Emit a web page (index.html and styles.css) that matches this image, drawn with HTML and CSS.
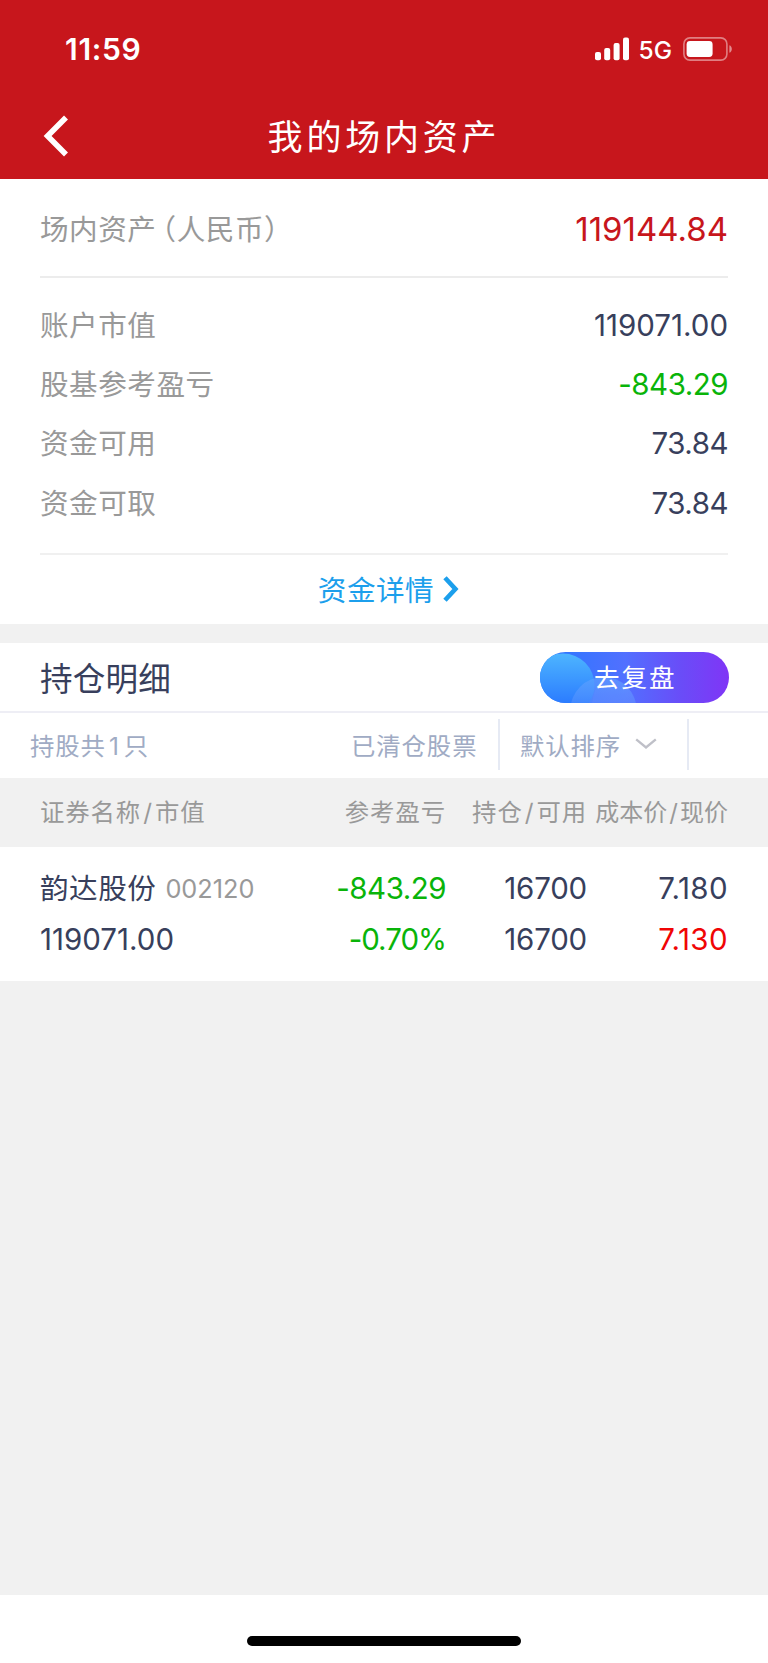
FILE: index.html
```html
<!DOCTYPE html>
<html lang="zh-CN">
<head>
<meta charset="utf-8">
<title>我的场内资产</title>
<link rel="stylesheet" href="styles.css">
</head>
<body>
<div class="screen">
  <header class="top">
    <div class="status">
      <span class="time">11:59</span>
      <div class="status-right">
        <svg class="signal" width="34" height="24" viewBox="0 0 34 24" fill="#fff">
          <rect x="0" y="15" width="6" height="8.3" rx="2"/>
          <rect x="9.2" y="11" width="6" height="12.3" rx="2"/>
          <rect x="18.6" y="6" width="6" height="17.3" rx="2"/>
          <rect x="28" y="0.6" width="6" height="22.7" rx="2"/>
        </svg>
        <span class="net">5G</span>
        <svg class="battery" width="50" height="24" viewBox="0 0 50 24">
          <rect x="0.9" y="0.9" width="43" height="22.2" rx="6" fill="none" stroke="#fff" stroke-opacity=".45" stroke-width="1.6"/>
          <rect x="3.6" y="4" width="26" height="16" rx="3.4" fill="#fff"/>
          <path d="M46.4 8.2c3.2 1.2 3.2 6.4 0 7.6z" fill="#fff" fill-opacity=".5"/>
        </svg>
      </div>
    </div>
    <div class="nav">
      <svg class="back" width="26" height="42" viewBox="0 0 26 42" fill="none" stroke="#fff" stroke-width="5.6"><path d="M23 2.600 4.600 21l18.400 18.400"/></svg>
      <h1 class="title">我的场内资产</h1>
    </div>
  </header>

  <section class="summary">
    <div class="total">
      <span class="label">场内资产<span class="paren">（</span>人民币）</span>
      <span class="total-value">119144.84</span>
    </div>
    <div class="rows">
      <div class="row"><span class="label">账户市值</span><span class="value">119071.00</span></div>
      <div class="row"><span class="label">股基参考盈亏</span><span class="value tight green">-843.29</span></div>
      <div class="row"><span class="label">资金可用</span><span class="value tight">73.84</span></div>
      <div class="row"><span class="label">资金可取</span><span class="value tight">73.84</span></div>
    </div>
    <a class="detail"><span>资金详情</span><svg width="16" height="26" viewBox="0 0 16 26" fill="none" stroke="#1c9fec" stroke-width="4.600"><path d="M2 1.800 12.400 13 2 24.200"/></svg></a>
  </section>

  <section class="holdings">
    <div class="hold-head">
      <h2 class="hold-title">持仓明细</h2>
      <div class="review">
        <svg class="review-bg" width="189" height="51" viewBox="0 0 189 51">
          <defs>
            <linearGradient id="base" x1="0" x2="1" y1="0" y2="0"><stop offset="0" stop-color="#2678ff"/><stop offset=".45" stop-color="#5170ff"/><stop offset=".75" stop-color="#6a4cf8"/><stop offset="1" stop-color="#8035f6"/></linearGradient>
            <linearGradient id="bubble" x1="0" x2="0" y1="0" y2="1"><stop offset="0" stop-color="#4db5ff"/><stop offset=".8" stop-color="#2b7bff"/><stop offset="1" stop-color="#2b7bff"/></linearGradient>
            <linearGradient id="small" x1="0" x2="0" y1="0" y2="1"><stop offset="0" stop-color="#5aa0ff" stop-opacity=".75"/><stop offset=".7" stop-color="#5a8cff" stop-opacity=".25"/></linearGradient>
            <clipPath id="pill"><rect width="189" height="51" rx="25.500"/></clipPath>
          </defs>
          <g clip-path="url(#pill)">
            <rect width="189" height="51" fill="url(#base)"/>
            <circle cx="23" cy="33" r="31.500" fill="url(#bubble)"/>
            <circle cx="63.500" cy="58" r="33" fill="url(#small)"/>
            <path d="M52 51q2-14 9-25h14q17 8 21 25z" fill="#7a8cff" fill-opacity=".18"/>
          </g>
        </svg>
        <span class="review-text">去复盘</span>
      </div>
    </div>
    <div class="filters">
      <span class="count">持股共<span class="num">1</span>只</span>
      <span class="cleared">已清仓股票</span>
      <div class="sort"><span>默认排序</span><svg width="22" height="12" viewBox="0 0 22 12" fill="none" stroke="#bfc0c8" stroke-width="2.400"><path d="M1.200 1.300 11 9.400l9.800-8.100"/></svg></div>
    </div>
    <div class="grid table-head">
      <span>证券名称<i class="slash">/</i>市值</span>
      <span>参考盈亏</span>
      <span>持仓<i class="slash">/</i>可用</span>
      <span class="price-head">成本价<i class="slash">/</i>现价</span>
    </div>
    <div class="stock">
      <div class="grid line">
        <span class="stock-id"><span class="name">韵达股份</span><span class="code">002120</span></span>
        <span class="tight green">-843.29</span>
        <span class="qty">16700</span>
        <span class="price">7.180</span>
      </div>
      <div class="grid line">
        <span>119071.00</span>
        <span class="rate green">-0.70%</span>
        <span class="qty">16700</span>
        <span class="price red">7.130</span>
      </div>
    </div>
  </section>
  <footer class="home"><div class="home-bar"></div></footer>
</div>
</body>
</html>
```
FILE: styles.css
```css
* { box-sizing: border-box; }
body {
  margin: 0;
  background: #f1f1f1;
  color: #383f5c;
  font-family: Inter, "Noto Sans CJK SC", sans-serif;
  font-weight: 400;
  white-space: nowrap;
}
h1, h2 { margin: 0; font-weight: 400; }
.screen { width: 768px; height: 1663px; display: flex; flex-direction: column; }
.top { height: 179px; background: #c7161c; color: #fff; }
.status { height: 98px; padding: 0 35px 0 65px; display: flex; align-items: center; justify-content: space-between; }
.time { font-size: 30px; font-weight: 600; line-height: 40px; letter-spacing: .7px; }
.status-right { display: flex; align-items: center; }
.net { margin: 1px 11px 0 10px; font-size: 24.500px; font-weight: 500; line-height: 30px; }
.nav { height: 76px; display: grid; grid-template-columns: 1fr auto 1fr; align-items: center; }
.back { margin: 0 0 2px 43px; }
.title { padding-top: 1px; font-size: 35px; line-height: 76px; letter-spacing: 3.800px; }
.summary { height: 445px; padding: 0 40px; background: #fff; }
.total { height: 99px; padding-top: 3px; display: flex; justify-content: space-between; align-items: center; border-bottom: 2px solid #ececec; }
.label { padding-top: 1px; font-size: 28.600px; line-height: 40px; letter-spacing: .5px; color: #999; }
.paren { margin-left: 5.500px; font-feature-settings: "halt"; }
.total-value { font-size: 33px; line-height: 40px; color: #c7161c; }
.rows { height: 277px; padding-top: 18px; border-bottom: 2px solid #f0f0f0; }
.row { height: 59.200px; display: flex; justify-content: space-between; align-items: center; }
.value { padding-bottom: 1px; font-size: 29.500px; line-height: 38px; }
.tight { letter-spacing: -.5px; }
.rate { letter-spacing: -1px; }
.qty { letter-spacing: -.2px; }
.price { letter-spacing: .4px; }
.green { color: #09b409; }
.red { color: #f00505; }
.detail { height: 67px; display: flex; align-items: center; justify-content: center; gap: 9px; padding-left: 9px; font-size: 28.600px; letter-spacing: .5px; color: #1c9fec; }
.holdings { margin-top: 19px; background: #fff; }
.hold-head { height: 70px; padding: 0 39px 0 40px; display: flex; align-items: center; justify-content: space-between; border-bottom: 2px solid #eeeef5; }
.hold-title { padding-top: 3px; font-size: 32.600px; line-height: 44px; letter-spacing: .2px; }
.review { position: relative; width: 189px; height: 51px; margin-top: 1px; }
.review-bg { display: block; }
.review-text { position: absolute; left: 54px; top: 0; line-height: 52px; font-size: 25.500px; letter-spacing: 2px; color: #fff; }
.filters { height: 65px; padding: 0 0 3px 30px; display: flex; align-items: center; font-size: 24.400px; letter-spacing: .9px; color: #a0abc4; }
.num { padding: 0 4px 0 3px; }
.count { width: 321px; }
.cleared { width: 147px; }
.sort { width: 191px; height: 51px; padding-left: 20px; display: flex; align-items: center; gap: 14px; border: 2px solid #e6eaf4; border-width: 0 2px; }
.grid { display: grid; grid-template-columns: 280px 126px 141px 141px; padding: 0 40px; align-items: center; }
.grid > span { text-align: right; }
.grid > span:first-child { text-align: left; }
.table-head { height: 69px; padding-bottom: 4px; background: #f1f1f1; font-size: 24.400px; letter-spacing: .9px; color: #999; }
.table-head .price-head { font-size: 24px; letter-spacing: 0; }
.slash { font-style: normal; padding: 0 2px; }
.stock { height: 134px; padding-top: 16px; background: #fff; }
.line { height: 51px; font-size: 29.500px; line-height: 51px; }
.stock-id { display: flex; align-items: center; }
.name { font-size: 28.600px; letter-spacing: .5px; }
.code { margin-left: 9px; font-size: 25.300px; color: #999; }
.home { margin-top: auto; height: 68px; padding: 41px 0 0 247px; background: #fff; }
.home-bar { width: 274px; height: 10px; border-radius: 5px; background: #000; }
```
